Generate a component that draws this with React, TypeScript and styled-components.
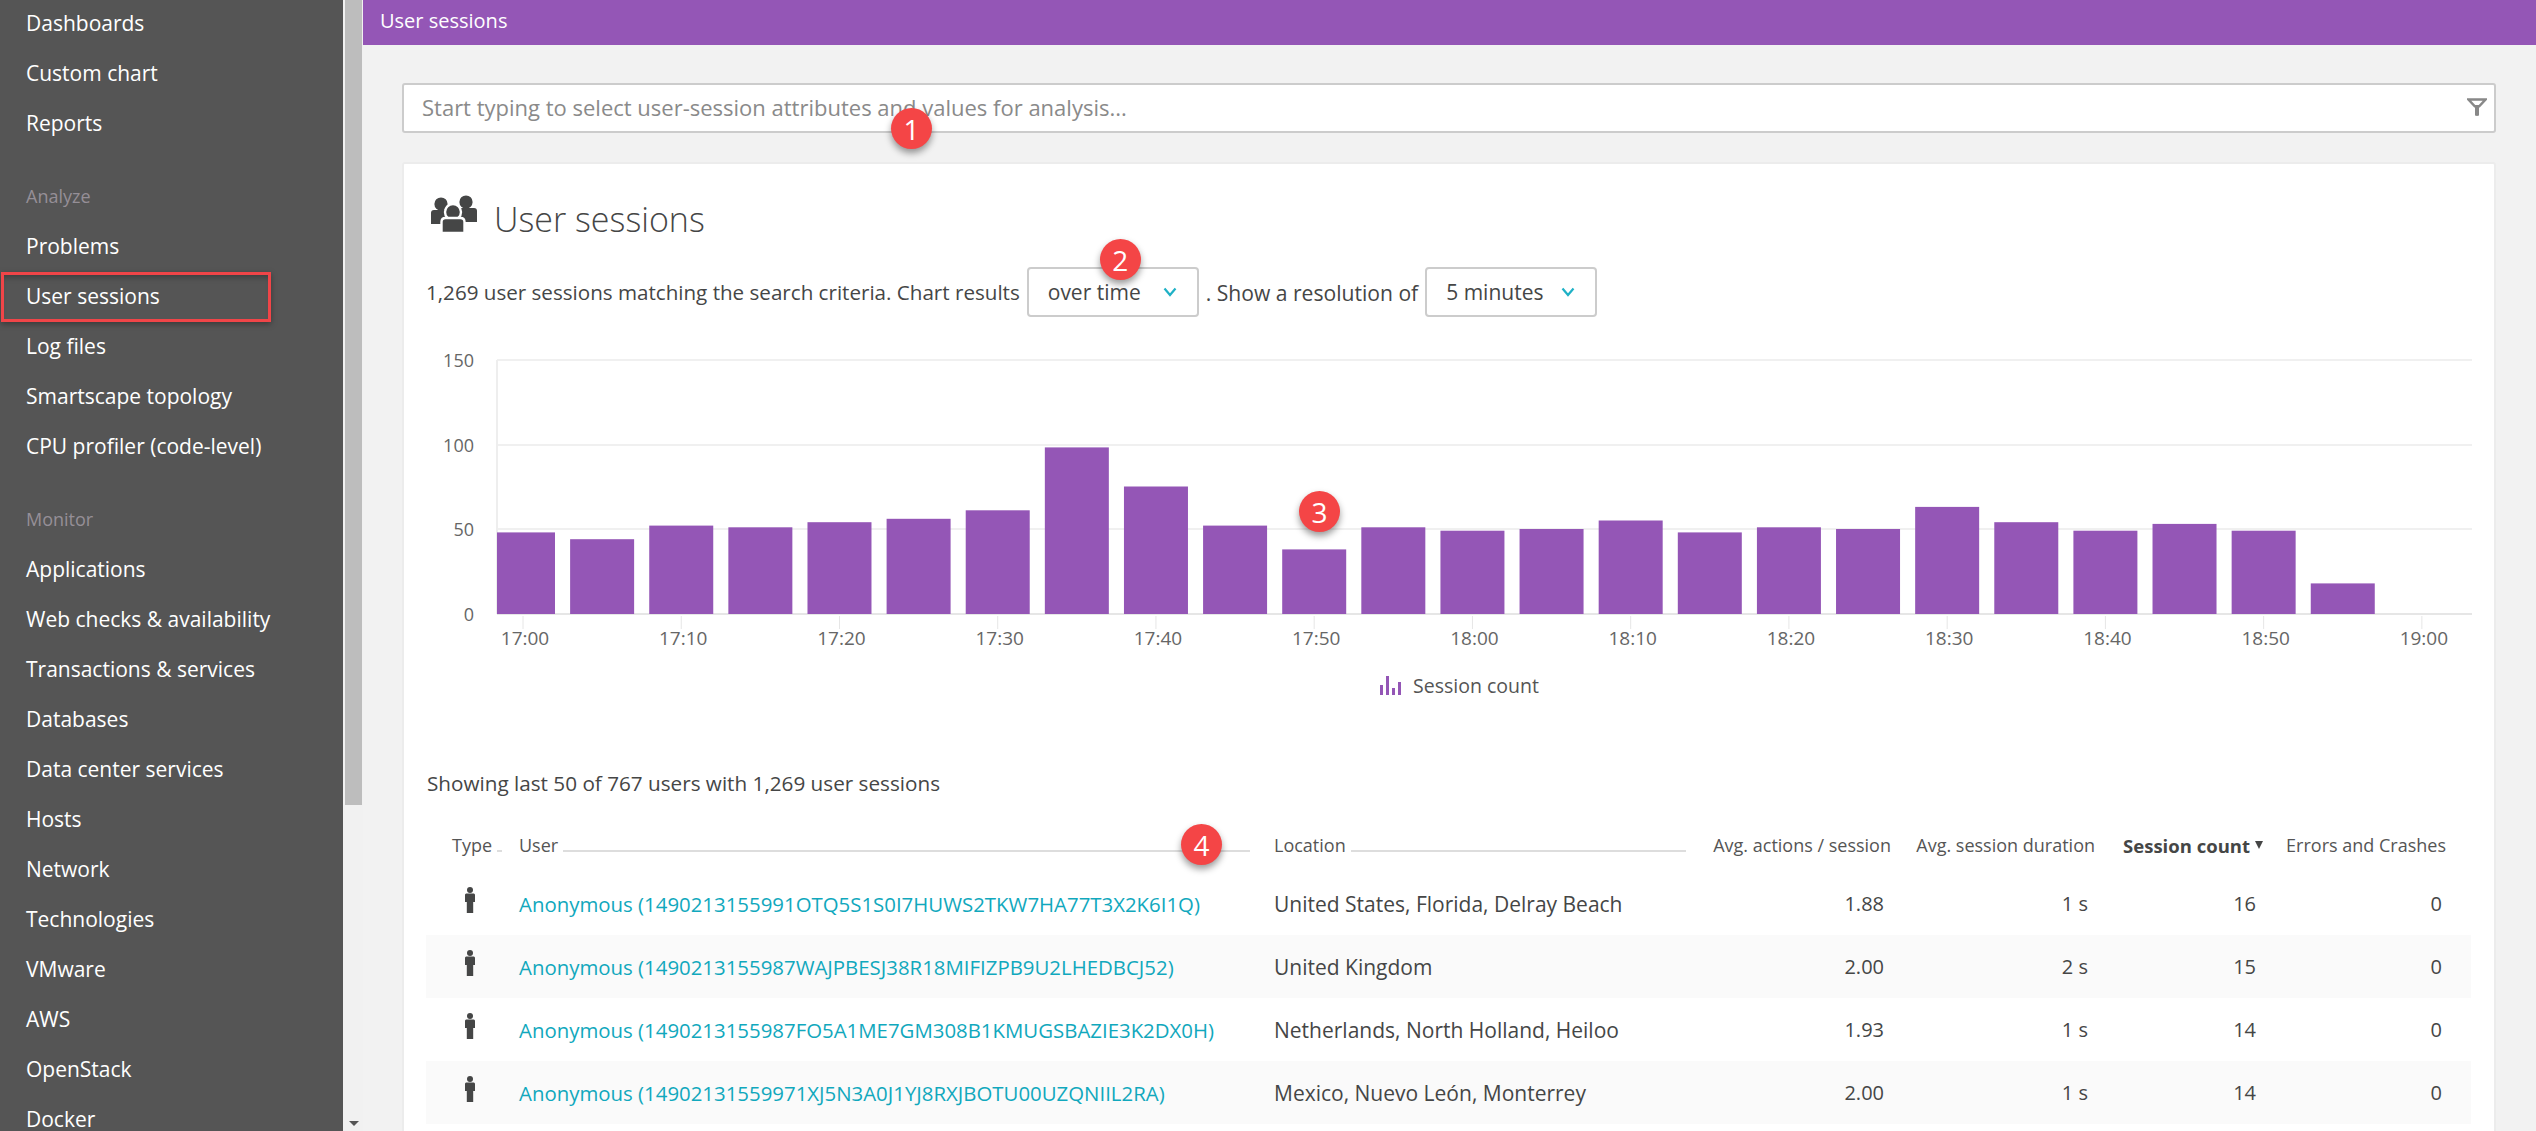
import React, { ReactElement } from "react";
import styled, { createGlobalStyle } from "styled-components";

const GlobalStyle = createGlobalStyle`
  html, body {
    margin: 0;
    height: 100%;
    overflow: hidden;
    background: #f2f2f2;
    font-family: "Open Sans", "Liberation Sans", sans-serif;
  }
`;

const Page = styled.div`
  display: flex;
  width: 2536px;
  height: 1131px;
  overflow: hidden;
`;

const Sidebar = styled.nav`
  flex: none;
  width: 343px;
  height: 100%;
  background: #555555;
  overflow: hidden;
`;

const NavList = styled.ul`
  list-style: none;
  margin: -2px 0 0;
  padding: 0;
`;

const NavItem = styled.li<{ $marked?: boolean }>`
  position: relative;
  height: 50px;
  padding-left: 26px;
  line-height: 50px;
  font-size: 21px;
  color: #ffffff;
  white-space: nowrap;
  ${p =>
    p.$marked &&
    `
    &::after {
      content: "";
      position: absolute;
      left: 1px;
      top: 1px;
      width: 270px;
      height: 50px;
      box-sizing: border-box;
      border: 3px solid #f04548;
      box-shadow: 0 2px 6px rgba(0, 0, 0, 0.35), inset 0 6px 6px -4px rgba(0, 0, 0, 0.3);
    }
  `}
`;

const NavLabel = styled.li`
  height: 50px;
  margin-top: 23px;
  padding-left: 26px;
  line-height: 50px;
  font-size: 18px;
  color: #958f97;
`;

const ScrollRail = styled.div`
  flex: none;
  display: flex;
  flex-direction: column;
  justify-content: space-between;
  align-items: center;
  box-sizing: border-box;
  width: 20px;
  height: 100%;
  padding: 0 1px 5px 2px;
  background: #f1f1f1;
`;

const ScrollThumb = styled.div`
  width: 17px;
  height: 805px;
  background: #bdbdbd;
`;

const ScrollArrow = styled.div`
  width: 0;
  height: 0;
  border-left: 5px solid transparent;
  border-right: 5px solid transparent;
  border-top: 5px solid #555555;
`;

const Main = styled.main`
  flex: 1;
  min-width: 0;
  background: #f2f2f2;
`;

const TopBar = styled.header`
  height: 45px;
  padding-left: 17px;
  line-height: 42px;
  font-size: 20px;
  color: #ffffff;
  background: #9456b6;
`;

const Content = styled.div`
  padding: 38px 40px 0 39px;
`;

const SearchBar = styled.div`
  position: relative;
  display: flex;
  align-items: center;
  justify-content: space-between;
  box-sizing: border-box;
  height: 50px;
  padding: 0 7px 2px 18px;
  background: #ffffff;
  border: 2px solid #cccccc;
  border-radius: 3px;
`;

const Placeholder = styled.span`
  font-size: 22px;
  color: #8a8a8a;
`;

const Badge = styled.span<{ $left: number; $top: number }>`
  position: absolute;
  left: ${p => p.$left}px;
  top: ${p => p.$top}px;
  z-index: 5;
  display: flex;
  align-items: center;
  justify-content: center;
  width: 41px;
  height: 41px;
  border-radius: 50%;
  background: #f44546;
  color: #ffffff;
  font-size: 28px;
  font-weight: 400;
  box-shadow: 0 4px 7px rgba(0, 0, 0, 0.4);
`;

const Card = styled.section`
  box-sizing: border-box;
  height: 1000px;
  margin-top: 29px;
  padding: 0 23px 0 22px;
  background: #ffffff;
  border: 2px solid #ececec;
  border-bottom: none;
  border-radius: 3px 3px 0 0;
`;

const TitleRow = styled.div`
  display: flex;
  align-items: center;
  gap: 16px;
  height: 36px;
  margin: 32px 0 0 4px;
`;

const Title = styled.h1`
  margin: 9px 0 0;
  font-size: 34px;
  font-weight: 300;
  color: #454646;
`;

const FilterRow = styled.div`
  display: flex;
  align-items: center;
  height: 50px;
  margin-top: 35px;
  color: #454646;
`;

const FilterText = styled.span<{ $size: number }>`
  font-size: ${p => p.$size}px;
`;

const Select = styled.div`
  position: relative;
  display: flex;
  align-items: center;
  justify-content: space-between;
  box-sizing: border-box;
  width: 172px;
  height: 50px;
  margin: 0 7px;
  padding: 0 20px 0 19px;
  font-size: 21px;
  border: 2px solid #cccccc;
  border-radius: 4px;
  background: #ffffff;
`;

const ChartBox = styled.div`
  position: relative;
  margin-top: 23px;
  height: 320px;
`;

const ChartSvg = styled.svg`
  display: block;
  font-family: "Open Sans", "Liberation Sans", sans-serif;
`;

const Legend = styled.div`
  display: flex;
  align-items: center;
  justify-content: center;
  gap: 12px;
  height: 30px;
  margin: 10px 0 0 21px;
  font-size: 19.5px;
  color: #555555;
`;

const Summary = styled.p`
  margin: 68px 0 0 1px;
  line-height: 30px;
  font-size: 20.7px;
  color: #454646;
`;

const TableHead = styled.div`
  position: relative;
  display: grid;
  grid-template-columns: 93px 755px 412px 205px 204px 170px 181px 25px;
  align-items: center;
  height: 54px;
  margin-top: 20px;
  font-size: 18px;
  color: #555555;
`;

const HeadCell = styled.div<{ $right?: boolean; $strong?: boolean; $inset?: number; $end?: number }>`
  display: flex;
  align-items: center;
  justify-content: ${p => (p.$right ? "flex-end" : "flex-start")};
  gap: 5px;
  padding-left: ${p => p.$inset || 0}px;
  padding-right: ${p => p.$end || 0}px;
  white-space: nowrap;
  font-size: ${p => (p.$strong ? "18.5px" : "18px")};
  font-weight: ${p => (p.$strong ? 700 : 400)};
  color: ${p => (p.$strong ? "#454646" : "#555555")};
`;

const HeadLine = styled.span`
  flex: 1;
  height: 2px;
  margin-top: 12px;
  background: #dddddd;
`;

const SortMark = styled.span`
  width: 0;
  height: 0;
  border-left: 4px solid transparent;
  border-right: 4px solid transparent;
  border-top: 8px solid #454646;
`;

const TableRow = styled.div<{ $shaded: boolean }>`
  display: grid;
  grid-template-columns: 93px 755px 412px 205px 204px 170px 181px 25px;
  align-items: center;
  height: 63px;
  font-size: 20px;
  color: #454646;
  background: ${p => (p.$shaded ? "#fafafa" : "#ffffff")};
`;

const TypeCell = styled.div`
  display: flex;
  justify-content: flex-start;
  padding: 0 0 7px 38px;
`;

const UserLink = styled.a`
  font-size: 20.4px;
  color: #11a8bd;
  text-decoration: none;
  white-space: nowrap;
`;

const LocationCell = styled.div`
  font-size: 21px;
  white-space: nowrap;
`;

const ValueCell = styled.div<{ $end: number }>`
  padding-right: ${p => p.$end}px;
  text-align: right;
`;

const navTop = ["Dashboards", "Custom chart", "Reports"];
const navAnalyze = ["Problems", "User sessions", "Log files", "Smartscape topology", "CPU profiler (code-level)"];
const navMonitor = [
  "Applications",
  "Web checks & availability",
  "Transactions & services",
  "Databases",
  "Data center services",
  "Hosts",
  "Network",
  "Technologies",
  "VMware",
  "AWS",
  "OpenStack",
  "Docker"
];

const sessions = [48, 44, 52, 51, 54, 56, 61, 98, 75, 52, 38, 51, 49, 50, 55, 48, 51, 50, 63, 54, 49, 53, 49, 18];
const timeLabels = ["17:00", "17:10", "17:20", "17:30", "17:40", "17:50", "18:00", "18:10", "18:20", "18:30", "18:40", "18:50", "19:00"];

const users = [
  {
    name: "Anonymous (1490213155991OTQ5S1S0I7HUWS2TKW7HA77T3X2K6I1Q)",
    location: "United States, Florida, Delray Beach",
    actions: "1.88",
    duration: "1 s",
    count: 16
  },
  {
    name: "Anonymous (1490213155987WAJPBESJ38R18MIFIZPB9U2LHEDBCJ52)",
    location: "United Kingdom",
    actions: "2.00",
    duration: "2 s",
    count: 15
  },
  {
    name: "Anonymous (1490213155987FO5A1ME7GM308B1KMUGSBAZIE3K2DX0H)",
    location: "Netherlands, North Holland, Heiloo",
    actions: "1.93",
    duration: "1 s",
    count: 14
  },
  {
    name: "Anonymous (14902131559971XJ5N3A0J1YJ8RXJBOTU00UZQNIIL2RA)",
    location: "Mexico, Nuevo León, Monterrey",
    actions: "2.00",
    duration: "1 s",
    count: 14
  }
];

const FilterIcon = () => (
  <svg width="20" height="18" viewBox="0 0 20 18">
    <path d="M1.5 1.500h17l-6.300 6.800H7.800z" fill="none" stroke="#888888" strokeWidth="2.400" />
    <path d="M8 8h4v9.500L10 18l-2-.5z" fill="#888888" />
  </svg>
);

const UsersIcon = () => (
  <svg width="48" height="38" viewBox="0 0 48 38">
    <circle cx="11" cy="9" r="6.6" fill="#454646" />
    <path d="M1 18c0-2 1-3 3-3h14c2 0 3 1 3 3v11H1z" fill="#454646" />
    <circle cx="36" cy="7" r="6.6" fill="#454646" />
    <path d="M27 16c0-2 1-3 3-3h14c2 0 3 1 3 3v11H27z" fill="#454646" />
    <circle cx="23" cy="17" r="8" fill="#454646" stroke="#ffffff" strokeWidth="2.4" />
    <path d="M11.5 38V27c0-2.500 1.500-4 4-4h15c2.500 0 4 1.500 4 4v11z" fill="#454646" stroke="#ffffff" strokeWidth="2.4" />
  </svg>
);

const PersonIcon = () => (
  <svg width="12" height="26" viewBox="0 0 12 26">
    <circle cx="6" cy="3" r="3" fill="#454646" />
    <path d="M1 8c0-1 .8-1.500 1.500-1.500h7C10.200 6.500 11 7 11 8v7H9.200v11H2.800V15H1z" fill="#454646" />
  </svg>
);

const Chevron = () => (
  <svg width="14" height="10" viewBox="0 0 14 10">
    <path d="M1.500 1.500L7 8l5.500-6.500" fill="none" stroke="#1fb1c6" strokeWidth="2.200" />
  </svg>
);

const LegendIcon = () => (
  <svg width="22" height="21" viewBox="0 0 22 21">
    <rect x="1" y="10" width="3" height="10" fill="#9456b6" />
    <rect x="7" y="1" width="3" height="19" fill="#9456b6" />
    <rect x="13" y="13" width="3" height="7" fill="#9456b6" />
    <rect x="19" y="7" width="3" height="13" fill="#9456b6" />
  </svg>
);

// chart coordinates are relative to the top left corner of the box
const SessionChart = (): ReactElement => {
  const zeroY = 274;
  const plotLeft = 71;
  const plotRight = 2046;
  const step = 79.12;
  const firstX = 97;
  return (
    <ChartSvg width="2047" height="320" viewBox="0 0 2047 320">
      {[20, 105, 189, 274].map((y, i) => (
        <g key={y}>
          <line x1={plotLeft} x2={plotRight} y1={y} y2={y} stroke={i === 3 ? "#e6e6e6" : "#f0f0f0"} strokeWidth="2" />
          <text x="48" y={y + 7} textAnchor="end" fontSize="18" fill="#666666">
            {[150, 100, 50, 0][i]}
          </text>
        </g>
      ))}
      <line x1={plotLeft} x2={plotLeft} y1="20" y2="274" stroke="#eeeeee" strokeWidth="2" />
      {sessions.map((value, i) => {
        const center = firstX + i * step;
        const left = Math.max(center - 32, plotLeft);
        const height = value * 1.7;
        return <rect key={i} x={left} y={zeroY - height} width={center + 32 - left} height={height} fill="#9456b6" />;
      })}
      {timeLabels.map((label, i) => {
        const x = firstX + i * step * 2;
        return (
          <g key={label}>
            <line x1={x} x2={x} y1="276" y2="289" stroke="#e6e6e6" strokeWidth="1" />
            <text x={x + 2} y="305" textAnchor="middle" fontSize="19" fill="#666666">
              {label}
            </text>
          </g>
        );
      })}
    </ChartSvg>
  );
};

const App = (): ReactElement => {
  return (
    <Page>
      <GlobalStyle />
      <Sidebar>
        <NavList>
          {navTop.map(item => (
            <NavItem key={item}>{item}</NavItem>
          ))}
          <NavLabel>Analyze</NavLabel>
          {navAnalyze.map(item => (
            <NavItem key={item} $marked={item === "User sessions"}>
              {item}
            </NavItem>
          ))}
          <NavLabel>Monitor</NavLabel>
          {navMonitor.map(item => (
            <NavItem key={item}>{item}</NavItem>
          ))}
        </NavList>
      </Sidebar>
      <ScrollRail>
        <ScrollThumb />
        <ScrollArrow />
      </ScrollRail>
      <Main>
        <TopBar>User sessions</TopBar>
        <Content>
          <SearchBar>
            <Placeholder>Start typing to select user-session attributes and values for analysis...</Placeholder>
            <FilterIcon />
            <Badge $left={487} $top={23}>1</Badge>
          </SearchBar>
          <Card>
            <TitleRow>
              <UsersIcon />
              <Title>User sessions</Title>
            </TitleRow>
            <FilterRow>
              <FilterText $size={20.6}>1,269 user sessions matching the search criteria. Chart results</FilterText>
              <Select>
                <span>over time</span>
                <Chevron />
                <Badge $left={71} $top={-30}>2</Badge>
              </Select>
              <FilterText $size={21.1}>. Show a resolution of</FilterText>
              <Select>
                <span>5 minutes</span>
                <Chevron />
              </Select>
            </FilterRow>
            <ChartBox>
              <SessionChart />
              <Badge $left={873} $top={151}>3</Badge>
            </ChartBox>
            <Legend>
              <LegendIcon />
              <span>Session count</span>
            </Legend>
            <Summary>Showing last 50 of 767 users with 1,269 user sessions</Summary>
            <TableHead>
              <HeadCell $inset={26} $end={17}>
                Type
                <HeadLine />
              </HeadCell>
              <HeadCell $end={24}>
                User
                <HeadLine />
              </HeadCell>
              <HeadCell>
                Location
                <HeadLine />
              </HeadCell>
              <HeadCell $right>Avg. actions / session</HeadCell>
              <HeadCell $right>Avg. session duration</HeadCell>
              <HeadCell $right $strong $end={2}>
                Session count
                <SortMark />
              </HeadCell>
              <HeadCell $right>Errors and Crashes</HeadCell>
              <Badge $left={755} $top={6}>4</Badge>
            </TableHead>
            {users.map((user, index) => (
              <TableRow key={user.name} $shaded={index % 2 === 1}>
                <TypeCell>
                  <PersonIcon />
                </TypeCell>
                <UserLink href="#">{user.name}</UserLink>
                <LocationCell>{user.location}</LocationCell>
                <ValueCell $end={7}>{user.actions}</ValueCell>
                <ValueCell $end={7}>{user.duration}</ValueCell>
                <ValueCell $end={9}>{user.count}</ValueCell>
                <ValueCell $end={4}>0</ValueCell>
                <div />
              </TableRow>
            ))}
          </Card>
        </Content>
      </Main>
    </Page>
  );
};

export default App;
